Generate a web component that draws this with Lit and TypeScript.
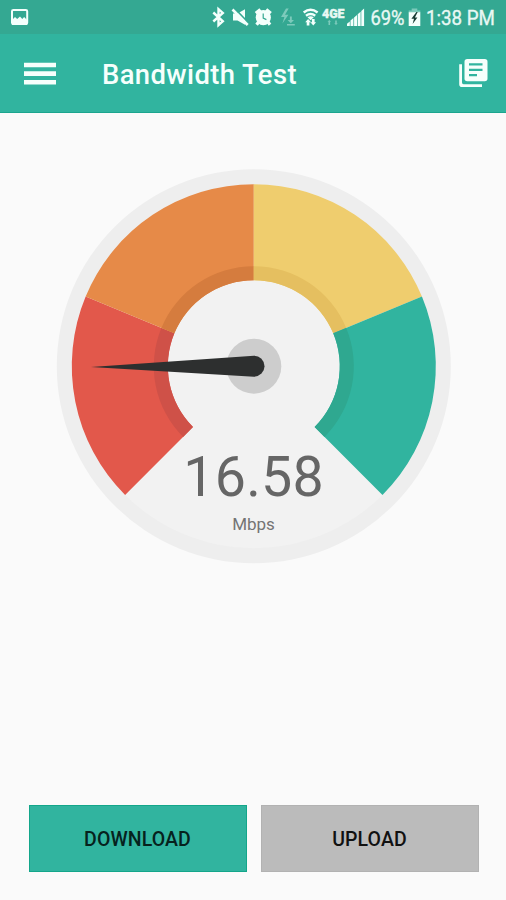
import { LitElement, html, svg, css } from "lit";
import { customElement, property } from "lit/decorators.js";

const CX = 253.8;
const CY = 366.2;

function sector(from: number, to: number, inner: number, outer: number): string {
  const pt = (deg: number, r: number) => {
    const a = (deg * Math.PI) / 180;
    return `${(CX + r * Math.sin(a)).toFixed(2)} ${(CY - r * Math.cos(a)).toFixed(2)}`;
  };
  return `M${pt(from, outer)}A${outer} ${outer} 0 0 1 ${pt(to, outer)}L${pt(to, inner)}A${inner} ${inner} 0 0 0 ${pt(from, inner)}Z`;
}

@customElement("status-bar")
class StatusBar extends LitElement {
  static styles = css`
    :host { display: flex; justify-content: space-between; height: 34px; background: #34a892; }
    svg { display: block; }
    text { font-family: Roboto, sans-serif; fill: #e9f8f4; stroke: #e9f8f4; stroke-width: 0.35px; }
    .white { fill: #f4fffc; }
    .dim { fill: #7ccabb; }
    .line { fill: none; stroke: #f4fffc; }
    .cut { fill: none; stroke: #34a892; }
    .net { font-weight: 900; }
  `;
  render() {
    return html`
      <svg width="40" height="34" viewBox="0 0 40 34">
        <rect class="line" x="12" y="9.9" width="15.2" height="14.2" rx="1.4" stroke-width="2" />
        <path class="white" d="M12 20l3-3 2.2 2 2.8-2.6 2.3 2.6 1.8-2 3 3v5H12z" />
      </svg>
      <svg width="306" height="34" viewBox="200 0 306 34">
        <path class="line" stroke-width="2.4" d="M213.300 12.500l9.500 8.800-4.300 3.800V9.200l4.300 3.700-9.500 8.600" />
        <path class="white" d="M233 13.600h4.500l7.500-4.400v15.600l-7.500-4.300H233z" />
        <path class="cut" stroke-width="1.6" d="M234.600 8.400l14.400 15" />
        <path class="line" stroke-width="2.6" d="M232.500 9.500l15.200 15.500" />
        <circle class="white" cx="263.3" cy="17.6" r="7.6" />
        <path class="line" stroke-width="3.2" d="M255.800 13.200l4.600-3.800M270.800 13.200l-4.600-3.800M258.600 22l-2 2.700M268 22l2 2.700" />
        <path class="cut" stroke-width="1.2" d="M263.200 13.600v4.500l3.200 1.500" />
        <path class="dim" d="M286 8.500l-5 8.500h3.400l-2 6.500 6-8.700h-3.400l3.700-6.300zM289.900 16.500h1.900v3.500h2.200l-3.200 3.200-3.200-3.200h2.300zM287 24h7.800v1.500H287z" />
        <path class="line" stroke-width="2.5" d="M303.700 12.400q6.800-5.400 13.900 0M306 15.800q4.700-3.500 9.200 0" />
        <path class="white" d="M307.500 17.200q3.100-1.800 6.300 0l-3.200 3zM308.100 19l3 3.200h-1.700v3.200h-2.700v-3.200h-1.500zM313.300 25.400l-2.900-3.200h1.500V19h2.700v3.200h1.500z" />
        <text class="net" x="322" y="18" font-size="12.5" textLength="22.5" lengthAdjust="spacingAndGlyphs">4GE</text>
        <path class="dim" d="M328.500 25v-3.200h-1l1.800-1.800 1.800 1.800h-1V25zM335.200 20.500h1.600v2.800h1l-1.800 1.800-1.800-1.800h1z" />
        <path class="white" d="M347 26v-2.200l2.800-2.300V26zM350.500 26v-5.400l2.900-2.500V26zM354.100 26v-8.600l2.900-2.500V26zM357.700 26V14.200l2.900-2.500V26zM361.300 26V11l2.800-2.600V26z" />
        <text x="370.5" y="25" font-size="20.5" textLength="34" lengthAdjust="spacingAndGlyphs">69%</text>
        <path class="dim" d="M408.700 12.500v-2h3V8.600h5.600v1.900h3v2z" />
        <path class="white" d="M408.700 12.200h11.600V26h-11.600z" />
        <path fill="#173c34" d="M416.400 12l-5 6.800h2.600l-1.400 5.200 4.800-6.600h-2.500l2.800-5.400z" />
        <text x="426" y="25" font-size="20.5" textLength="69" lengthAdjust="spacingAndGlyphs">1:38 PM</text>
      </svg>
    `;
  }
}

@customElement("app-bar")
class AppBar extends LitElement {
  static styles = css`
    :host {
      display: flex; align-items: center; box-sizing: border-box; height: 79px;
      padding: 0 18px 0 24px; background: #31b49f; border-bottom: 1px solid #1ba58e;
    }
    .menu { width: 32px; height: 24px; display: block; }
    .pages { width: 30px; height: 32px; display: block; }
    h1 {
      flex: 1; margin: 3px 0 0 46px; white-space: nowrap;
      font: 500 27.4px/36px Roboto, sans-serif; letter-spacing: 0.4px; color: #f6fffc;
    }
  `;
  render() {
    return html`
      <svg class="menu" viewBox="0 0 32 24" fill="#f6fffc">
        <path d="M0 1.700h32v4.600H0zM0 10.300h32v4.600H0zM0 19h32v4.600H0z" />
      </svg>
      <h1>Bandwidth Test</h1>
      <svg class="pages" viewBox="0 0 30 32" fill="#f6fffc">
        <path d="M1.200 7.200H4v18.400q0 1.600 1.600 1.600H24V30H4q-2.800 0-2.800-2.800z" />
        <path fill-rule="evenodd" d="M9.200 2h17.600q2.700 0 2.700 2.700v16.800q0 2.700-2.700 2.700H9.200q-2.700 0-2.700-2.700V4.700q0-2.700 2.700-2.700zM11 6.300v2.200h13.500V6.300zM11 11.700v2.200h13.500v-2.200zM11 17v2.200h8v-2.200z" />
      </svg>
    `;
  }
}

@customElement("speed-gauge")
class SpeedGauge extends LitElement {
  static styles = css`
    :host { display: block; height: 430px; }
    svg { display: block; }
    text { font-family: Roboto, sans-serif; }
  `;
  @property() value = "16.58";
  @property() unit = "Mbps";
  render() {
    const bands: [number, number, string, string][] = [
      [-135, -67.5, "#e2584b", "#cf5148"],
      [-67.5, 0, "#e68a48", "#d57c3e"],
      [0, 67.5, "#efcd6e", "#e5bf60"],
      [67.5, 135, "#31b49f", "#2fa890"],
    ];
    return html`
      <svg width="506" height="430" viewBox="0 148 506 430">
        <circle cx=${CX} cy=${CY} r="197" fill="#eeeeee" />
        <circle cx=${CX} cy=${CY} r="182" fill="#f2f2f2" />
        ${bands.map(
          ([from, to, color, shade]) => svg`
            <path d=${sector(from, to, 86, 182)} fill=${color} />
            <path d=${sector(from, to, 86, 100)} fill=${shade} />`
        )}
        <circle cx=${CX} cy=${CY} r="27.5" fill="#cdcdcd" />
        <path d="M91 366.900L254 355.700A10.500 10.500 0 0 1 254 376.700Z" fill="#2d2f2f" />
        <text x="183.2" y="496.3" font-size="55.5" textLength="140.5" fill="#666">${this.value}</text>
        <text x="232.3" y="530" font-size="17" textLength="42.5" fill="#747474">${this.unit}</text>
      </svg>
    `;
  }
}

@customElement("app-root")
class AppRoot extends LitElement {
  static styles = css`
    :host { display: flex; flex-direction: column; height: 900px; background: #fafafa; }
    main { flex: 1; display: flex; flex-direction: column; justify-content: space-between; padding-top: 35px; }
    .actions { display: grid; grid-template-columns: 218px 218px; gap: 14px; padding: 0 27.5px 28px 28.5px; }
    button {
      box-sizing: border-box; height: 67px; padding: 3px 0 0; border: 1px solid #b2b2b2; background: #bbb;
      font: 500 19.5px/24px Roboto, sans-serif; letter-spacing: 0.1px; color: #111;
    }
    .primary { background: #31b49f; border-color: #13a68a; color: #06221d; }
  `;
  render() {
    return html`
      <status-bar></status-bar>
      <app-bar></app-bar>
      <main>
        <speed-gauge></speed-gauge>
        <div class="actions">
          <button class="primary">DOWNLOAD</button>
          <button>UPLOAD</button>
        </div>
      </main>
    `;
  }
}
